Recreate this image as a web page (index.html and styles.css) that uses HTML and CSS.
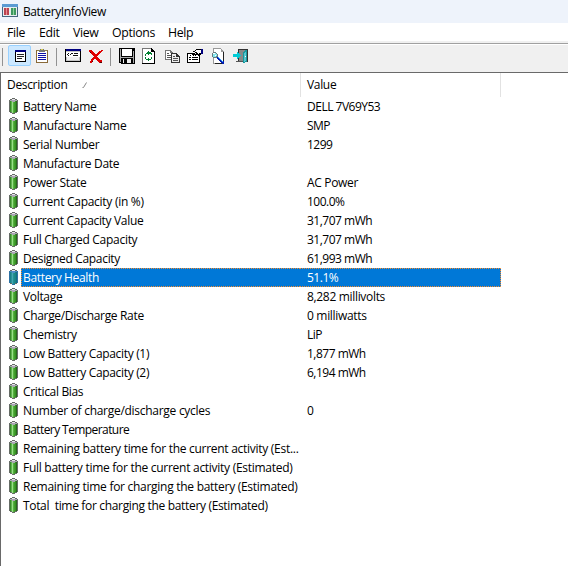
FILE: index.html
```
<!DOCTYPE html>
<html lang="en">
<head>
<meta charset="utf-8">
<title>BatteryInfoView</title>
<link rel="stylesheet" href="styles.css">
</head>
<body>
<svg class="defs" aria-hidden="true">
  <defs>
    <linearGradient id="green"><stop offset="0" stop-color="#2f7c22"/><stop offset=".15" stop-color="#429b31"/><stop offset=".35" stop-color="#9be38a"/><stop offset=".52" stop-color="#4caa36"/><stop offset=".8" stop-color="#358f22"/><stop offset="1" stop-color="#1d5716"/></linearGradient>
    <symbol id="cell" viewBox="0 0 10 16">
      <path fill="#666c66" d="M1 1h2V0h3v1h2v1h1v12H8v1H6v1H3v-1H1v-1H0V2h1z"/>
      <path fill="url(#green)" d="M1 3h7v11H6v1H3v-1H1z"/>
      <path fill="#aaa5b2" d="M1 2h2V1h3v1h2v1H6v1H3V3H1z"/>
      <path fill="#e5e1ea" d="M3 1h3v1H3z"/>
    </symbol>
  </defs>
</svg>
<header class="titlebar">
  <svg class="app-icon" width="16" height="14" viewBox="0 0 16 14">
    <path fill="#46657f" d="M0 0h16v13H0z"/><path fill="#5b9bd3" d="M0 0h16v3H0z"/><path fill="#e8edf0" d="M1 3h14v9H1z"/>
    <path fill="#b94450" d="M2 4h5v7H2z"/><path fill="#ed8990" d="M4 4h1v7H4z"/><path fill="#3e9860" d="M9 4h5v7H9z"/><path fill="#8ed39c" d="M11 4h1v7h-1z"/>
  </svg>
  <span class="title">BatteryInfoView</span>
</header>
<nav class="menu"><span class="m-file">File</span><span class="m-edit">Edit</span><span class="m-view">View</span><span class="m-options">Options</span><span class="m-help">Help</span></nav>
<div class="toolbar">
  <i class="sep first"></i>
  <span class="pressed"><svg viewBox="0 0 16 16"><path fill="#000" d="M3 2h11v12H3z"/><path fill="#fff" d="M4 4h9v9H4z"/><path fill="#000080" d="M3 2h11v2H3z"/><path fill="#222" d="M5 6h7v1H5zM5 8h7v1H5zM5 10h5v1H5z"/></svg></span>
  <svg class="i-clip" viewBox="0 0 16 16"><path fill="#8d8048" d="M2 2h12v13H2z"/><path fill="#fff" d="M3 3h10v11H3z"/><path fill="#777" d="M5 2h1V1h4v1h1v2H5z"/><path fill="#ded34d" d="M7 1h2v1H7z"/><path fill="#1010a8" d="M4 5h8v1H4zM4 7h8v1H4zM4 9h8v1H4zM4 11h8v1H4z"/><path fill="none" stroke="#8a6a38" d="M2.5 2v13M13.5 2v13M2 14.5h12"/></svg>
  <i class="sep second"></i>
  <svg class="i-window" viewBox="0 0 16 16"><path fill="#000" d="M0 1h16v13H0z"/><path fill="#fff" d="M1 4h14v9H1z"/><path fill="#000080" d="M1 1h15v2H1z"/><path fill="#c4c4c4" d="M1 3h14v1H1zM1 9h14v4H1z"/><path fill="#eee" d="M2 9h12v3H2z"/><path fill="#111" d="M3 5h1v1H3zM6 5h2v1H6zM9 5h4v1H9zM2 6h1v1H2zM5 6h1v1H5zM3 7h1v1H3zM8 7h5v1H8z"/></svg>
  <svg class="i-delete" viewBox="0 0 16 16"><path fill="#e00000" d="M1 2h3v1h1v1h1v1h1v1h2V5h1V4h1V3h2V2h2v1h-1v1h-1v1h-1v1h-1v1h-1v1H9v1h1v1h1v1h1v1h2v2h-1v1h-2v-1h-1v-1H9v-1H8v-1H6v1H5v2H4v1H2v-2h1v-2h1v-1h1V9h1V8H5V7H4V6H3V5H2V4H1z"/><path fill="#500" d="M13 14h1v1h-2v-1zM4 13h1v1H4zM2 4h1v1H2z"/></svg>
  <i class="sep third"></i>
  <svg class="i-save" viewBox="0 0 16 16"><path fill="#000" d="M0 0h16v16H2v-1H0z"/><path fill="#fff" d="M3 1h10v7H3z"/><path fill="#aaa" d="M1 1h1v13H1zM14 3h1v12h-1zM2 9h12v1H2z"/><path fill="#eee" d="M4 11h8v4H4z"/><path fill="#000" d="M5 11h3v4H5z"/></svg>
  <svg class="i-refresh" viewBox="0 0 16 16"><path fill="#000" d="M1 0h10v1h1v1h1v1h1v13H1z"/><path fill="#fff" d="M2 1h8v3h3v11H2z"/><path fill="#777" d="M1 0h9v1H2v14H1z"/><path fill="#008030" d="M6 4h1V3h1v1h2v1h1v2h-1V6H8v1H7V6H6zM4 6h1V5h1v1H5v2H4zM10 9h1v2h-1v1H9v-1h1zM4 9h1v2h2v-1h1v1h1v1H8v1H7v-1H5v-1H4z"/></svg>
  <svg class="i-copy" viewBox="0 0 16 16"><path fill="#777" d="M1 2h6v1h1v1h1v8H1z"/><path fill="#fff" d="M2 3h4v2h2v6H2z"/><path fill="#555" d="M3 5h2v1H3zM3 7h4v1H3zM3 9h4v1H3z"/><path fill="#333" d="M7 5h6v1h1v1h1v1h1v7H7z"/><path fill="#eee" d="M8 6h4v3h3v5H8z"/><path fill="#555" d="M9 8h2v1H9zM9 10h5v1H9zM9 12h5v1H9z"/></svg>
  <svg class="i-props" viewBox="0 0 16 16"><path fill="#000" d="M0 5h13v10H0z"/><path fill="#fff" d="M1 6h11v8H1z"/><path fill="#000" d="M5 5h1V3h2V2h1V1h6v1h1v4h-2v1h-2v1h-1V7H9v1H8V7H7v1H6V7H5z"/><path fill="#fff" d="M9 2h5v3h-2v1h-1V5h-1V4H9V3H8v2h1v1H8V5H6V4h3z"/><path fill="#000080" d="M14 1h2v5h-2z"/><path fill="#000" d="M2 9h2v1H2zM5 9h6v1H5zM2 11h2v1H2zM5 11h6v1H5zM3 7h1v1H3zM5 6h1v1H5z"/></svg>
  <svg class="i-find" viewBox="0 0 16 16"><path fill="#999" d="M3 0h8v1h1v1h1v1h1v13H3z"/><path fill="#fff" d="M4 1h7v3h2v11H4z"/><path fill="#222" d="M13 4h1v12H5v-1h8z"/><path fill="#667b80" d="M3 4h3v1h1v1h1v3H7v1H3V9H2V5h1z"/><path fill="#83e7ee" d="M3 5h3v1h1v2H6v1H3z"/><path fill="#fff" d="M3 5h2v1H3zM5 7h1v1H5z"/><path fill="#001aaf" d="M7 9h2v1h1v1h1v1h1v1h2v3h-2v-1h-1v-1h-1v-1H9v-1H8v-1H7z"/><path fill="#31a2ff" d="M8 9h1v1h1v1h1v1h1v1h1v1h-1v-1h-1v-1h-1v-1H9v-1H8z"/></svg>
  <svg class="i-exit" viewBox="0 0 16 16"><path fill="#333" d="M5 1h10v13h-4v1h-1v-2H5z"/><path fill="#888" d="M6 2h7v11H6z"/><path fill="#18989e" d="M10 4h1V3h1V2h2v12h-2v1h-2z"/><path fill="#57c5ce" d="M11 5h1V4h1v9h-1v1h-1z"/><path fill="#fff" d="M12 8h1v1h-1z"/><path fill="#00cbd5" d="M0 6h4V4h1v1h1v1h1v1h1v1H7v1H6v1H5v1H4V9H0z"/><path fill="#555" d="M3 13h7v1H3z"/></svg>
</div>
<main class="list">
  <div class="head"><span class="hcol desc">Description<svg class="sort" viewBox="0 0 6 6"><path d="M.5 5.5h1l3-5" fill="none" stroke="#888"/></svg></span><span class="hcol value">Value</span></div>
  <div class="row"><svg class="bat"><use href="#cell"/></svg><span class="name">Battery Name</span><span class="val">DELL 7V69Y53</span></div>
  <div class="row"><svg class="bat"><use href="#cell"/></svg><span class="name">Manufacture Name</span><span class="val">SMP</span></div>
  <div class="row"><svg class="bat"><use href="#cell"/></svg><span class="name">Serial Number</span><span class="val">1299</span></div>
  <div class="row"><svg class="bat"><use href="#cell"/></svg><span class="name">Manufacture Date</span><span class="val"></span></div>
  <div class="row"><svg class="bat"><use href="#cell"/></svg><span class="name">Power State</span><span class="val loose">AC Power</span></div>
  <div class="row"><svg class="bat"><use href="#cell"/></svg><span class="name wide">Current Capacity (in %)</span><span class="val">100.0%</span></div>
  <div class="row"><svg class="bat"><use href="#cell"/></svg><span class="name">Current Capacity Value</span><span class="val">31,707 mWh</span></div>
  <div class="row"><svg class="bat"><use href="#cell"/></svg><span class="name wide">Full Charged Capacity</span><span class="val">31,707 mWh</span></div>
  <div class="row"><svg class="bat"><use href="#cell"/></svg><span class="name">Designed Capacity</span><span class="val">61,993 mWh</span></div>
  <div class="row selected"><svg class="bat"><use href="#cell"/><path fill="#0078d7" fill-opacity=".55" d="M0 2h9v12H6v2H3v-2H0z"/></svg><span class="name">Battery Health</span><span class="val">51.1%</span></div>
  <div class="row"><svg class="bat"><use href="#cell"/></svg><span class="name">Voltage</span><span class="val loose">8,282 millivolts</span></div>
  <div class="row"><svg class="bat"><use href="#cell"/></svg><span class="name">Charge/Discharge Rate</span><span class="val loose">0 milliwatts</span></div>
  <div class="row"><svg class="bat"><use href="#cell"/></svg><span class="name">Chemistry</span><span class="val">LiP</span></div>
  <div class="row"><svg class="bat"><use href="#cell"/></svg><span class="name">Low Battery Capacity (1)</span><span class="val">1,877 mWh</span></div>
  <div class="row"><svg class="bat"><use href="#cell"/></svg><span class="name">Low Battery Capacity (2)</span><span class="val">6,194 mWh</span></div>
  <div class="row"><svg class="bat"><use href="#cell"/></svg><span class="name">Critical Bias</span><span class="val"></span></div>
  <div class="row"><svg class="bat"><use href="#cell"/></svg><span class="name wide">Number of charge/discharge cycles</span><span class="val">0</span></div>
  <div class="row"><svg class="bat"><use href="#cell"/></svg><span class="name tight">Battery Temperature</span><span class="val"></span></div>
  <div class="row"><svg class="bat"><use href="#cell"/></svg><span class="name wide">Remaining battery time for the current activity (Est...</span><span class="val"></span></div>
  <div class="row"><svg class="bat"><use href="#cell"/></svg><span class="name wide">Full battery time for the current activity (Estimated)</span><span class="val"></span></div>
  <div class="row"><svg class="bat"><use href="#cell"/></svg><span class="name wide">Remaining time for charging the battery (Estimated)</span><span class="val"></span></div>
  <div class="row"><svg class="bat"><use href="#cell"/></svg><span class="name">Total  time for charging the battery (Estimated)</span><span class="val"></span></div>
</main>
</body>
</html>
```
FILE: styles.css
```
* { box-sizing: border-box; }
body { margin: 0; width: 568px; height: 566px; overflow: hidden; display: flex; flex-direction: column; background: #fff; color: #000; font: 12px/19px "Open Sans", "Noto Sans", sans-serif; letter-spacing: -0.33px; }
svg { display: block; flex: none; shape-rendering: crispEdges; }
.defs { position: absolute; width: 0; height: 0; }
.titlebar { flex: none; height: 23px; background: #eef3fb; display: flex; align-items: flex-start; padding: 4px 0 0 2px; }
.title { margin-left: 5px; line-height: 16px; letter-spacing: -0.4px; }
.menu { flex: none; display: grid; grid-template-columns: 32px 34px 39px 56px auto; height: 18px; padding-left: 7px; line-height: 20px; font-size: 12.3px; }
.toolbar { flex: none; height: 31px; background: #f0f0f0; display: flex; align-items: flex-start; padding: 7px 0 0 2px; background-image: linear-gradient(#f0f0f0 2px, #a0a0a0 2px, #a0a0a0 3px, #fff 3px, #fff 4px, transparent 4px); }
.toolbar > svg, .pressed svg { width: 16px; height: 16px; }
.sep { flex: none; width: 1px; height: 18px; background: #929292; }
.pressed { width: 23px; height: 21px; margin: -3px 0 0 5px; border: 1px solid #99d1ff; border-radius: 2px; background: #cce8ff; padding: 2px 0 0 3px; }
.i-clip { margin-left: 3px; }
.second { margin-left: 6px; }
.i-window { margin-left: 8px; }
.i-delete { margin-left: 7px; }
.third { margin-left: 6px; }
.i-save { margin-left: 8px; }
.i-refresh { margin-left: 6px; }
.i-copy, .i-props, .i-find, .i-exit { margin-left: 7px; }
.list { flex: 1; border-top: 1px solid #696969; border-left: 1px solid #696969; }
.head { display: flex; height: 24px; line-height: 24px; }
.hcol { border-right: 1px solid #e2e2e2; padding-left: 6px; }
.desc { width: 300px; display: flex; }
.value { width: 200px; }
.sort { width: 6px; height: 6px; margin: 9px 0 0 15px; shape-rendering: auto; }
.row { height: 19px; display: flex; padding-left: 8px; }
.bat { width: 10px; height: 16px; margin-top: 1px; }
.name { width: 279px; margin-left: 2px; padding-left: 2px; white-space: pre; }
.wide { letter-spacing: -0.28px; }
.tight { letter-spacing: -0.58px; }
.val { width: 201px; padding-left: 7px; letter-spacing: -0.5px; }
.loose { letter-spacing: -0.32px; }
.selected .name, .selected .val { color: #fff; background: #0078d7; border: 1px dotted #f28b30; line-height: 17px; }
.selected .name { border-right: 0; padding-left: 1px; }
.selected .val { border-left: 0; }
```
